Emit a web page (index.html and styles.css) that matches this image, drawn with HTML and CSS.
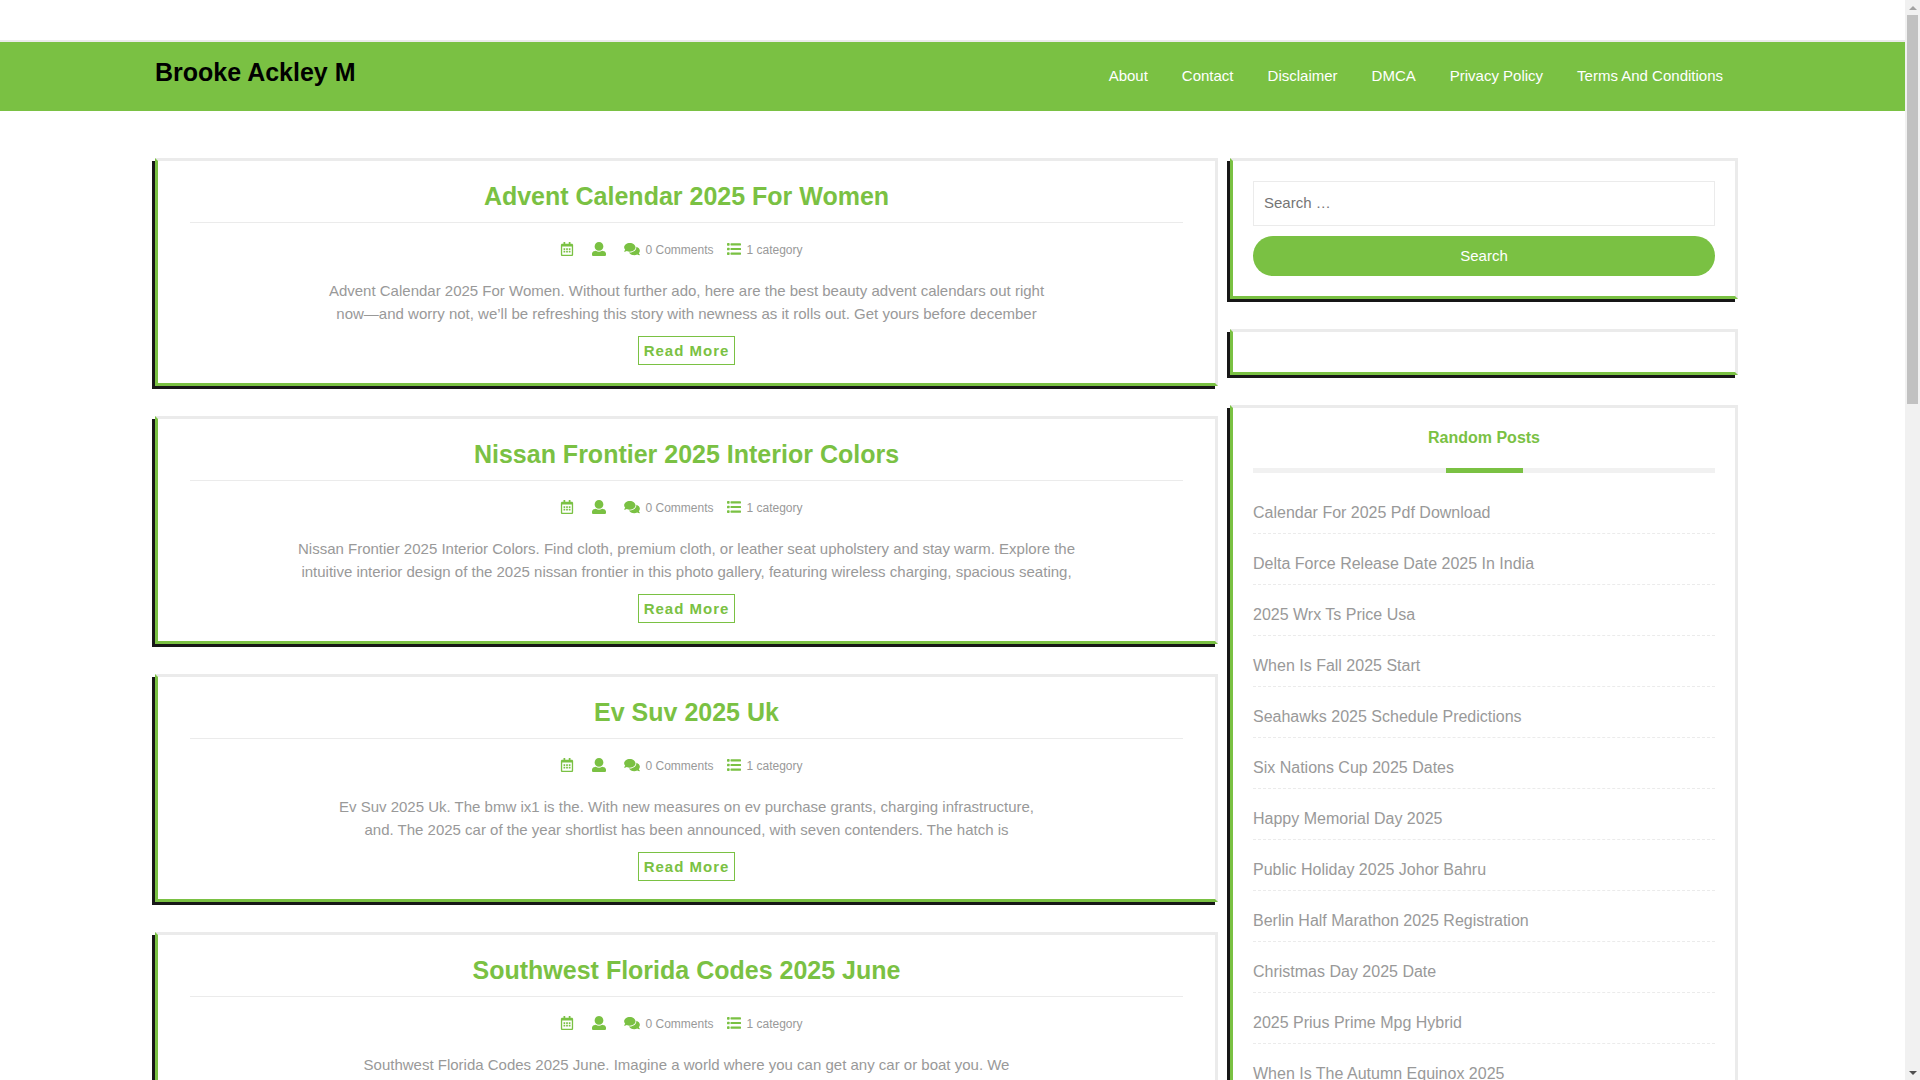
FILE: index.html
```html
<!DOCTYPE html>
<html lang="en">
<head>
<meta charset="utf-8">
<meta name="viewport" content="width=device-width, initial-scale=1">
<title>Brooke Ackley M</title>
<link rel="stylesheet" href="styles.css">
</head>
<body>
<svg class="sprite" aria-hidden="true">
  <symbol id="calendar" viewBox="0 0 448 512"><path d="M148 288h-40c-6.600 0-12-5.400-12-12v-40c0-6.600 5.400-12 12-12h40c6.600 0 12 5.400 12 12v40c0 6.600-5.400 12-12 12zm108-12v-40c0-6.600-5.400-12-12-12h-40c-6.600 0-12 5.400-12 12v40c0 6.600 5.400 12 12 12h40c6.600 0 12-5.400 12-12zm96 0v-40c0-6.600-5.400-12-12-12h-40c-6.600 0-12 5.400-12 12v40c0 6.600 5.400 12 12 12h40c6.600 0 12-5.400 12-12zm-96 96v-40c0-6.600-5.400-12-12-12h-40c-6.600 0-12 5.400-12 12v40c0 6.600 5.400 12 12 12h40c6.600 0 12-5.400 12-12zm-96 0v-40c0-6.600-5.400-12-12-12h-40c-6.600 0-12 5.400-12 12v40c0 6.600 5.400 12 12 12h40c6.600 0 12-5.400 12-12zm192 0v-40c0-6.600-5.400-12-12-12h-40c-6.600 0-12 5.400-12 12v40c0 6.600 5.400 12 12 12h40c6.600 0 12-5.400 12-12zm96-260v352c0 26.500-21.500 48-48 48H48c-26.500 0-48-21.500-48-48V112c0-26.500 21.500-48 48-48h48V12c0-6.600 5.400-12 12-12h40c6.600 0 12 5.400 12 12v52h128V12c0-6.600 5.400-12 12-12h40c6.600 0 12 5.400 12 12v52h48c26.500 0 48 21.500 48 48zm-48 346V160H48v298c0 3.300 2.700 6 6 6h340c3.300 0 6-2.700 6-6z"/></symbol>
  <symbol id="user" viewBox="0 0 512 512"><path d="M256 0c88.366 0 160 71.634 160 160s-71.634 160-160 160S96 248.366 96 160 167.634 0 256 0zm183.283 333.821l-71.313-17.828c-74.923 53.890-165.738 41.864-225.940 0l-71.313 17.828C29.981 344.505 0 382.903 0 426.955V464c0 26.510 21.490 48 48 48h416c26.510 0 48-21.490 48-48v-37.045c0-44.052-29.981-82.450-72.717-93.134z"/></symbol>
  <symbol id="comments" viewBox="0 0 576 512"><path d="M416 192c0-88.400-93.100-160-208-160S0 103.600 0 192c0 34.300 14.100 65.900 38 92-13.400 30.200-35.500 54.200-35.800 54.500-2.200 2.300-2.800 5.700-1.500 8.700S4.800 352 8 352c36.600 0 66.900-12.300 88.700-25 32.200 15.700 70.300 25 111.300 25 114.900 0 208-71.600 208-160zm122 220c23.900-26 38-57.700 38-92 0-66.900-53.500-124.200-129.300-148.100.900 6.600 1.300 13.300 1.300 20.100 0 105.900-107.700 192-240 192-10.800 0-21.300-.8-31.700-1.900C207.800 439.600 281.800 480 368 480c41 0 79.100-9.200 111.300-25 21.800 12.700 52.100 25 88.700 25 3.200 0 6.100-1.900 7.300-4.800 1.300-2.900.7-6.300-1.500-8.700-.3-.2-22.400-24.200-35.800-54.500z"/></symbol>
  <symbol id="list" viewBox="0 0 512 512"><rect y="40" width="96" height="96" rx="24"/><rect y="208" width="96" height="96" rx="24"/><rect y="376" width="96" height="96" rx="24"/><rect x="128" y="48" width="384" height="80" rx="16"/><rect x="128" y="216" width="384" height="80" rx="16"/><rect x="128" y="384" width="384" height="80" rx="16"/></symbol>
</svg>
<div class="frame">
  <div class="pane">
    <header class="header">
      <div class="topbar"></div>
      <div class="navbar container">
        <a class="brand" href="#">Brooke Ackley M</a>
        <nav class="menu">
          <a href="#">About</a>
          <a href="#">Contact</a>
          <a href="#">Disclaimer</a>
          <a href="#">DMCA</a>
          <a href="#">Privacy Policy</a>
          <a href="#">Terms And Conditions</a>
        </nav>
      </div>
    </header>
    <div class="content container">
      <main class="stack">
        <article class="card post">
          <h2 class="post-title"><a href="#">Advent Calendar 2025 For Women</a></h2>
          <div class="meta">
            <svg class="icon"><use href="#calendar"/></svg>
            <svg class="icon"><use href="#user"/></svg>
            <span class="meta-item"><svg class="icon icon-wide"><use href="#comments"/></svg>0 Comments</span>
            <span class="meta-item"><svg class="icon"><use href="#list"/></svg>1 category</span>
          </div>
          <p class="excerpt">Advent Calendar 2025 For Women. Without further ado, here are the best beauty advent calendars out right<br>now—and worry not, we’ll be refreshing this story with newness as it rolls out. Get yours before december</p>
          <a class="more" href="#">Read More</a>
        </article>
        <article class="card post">
          <h2 class="post-title"><a href="#">Nissan Frontier 2025 Interior Colors</a></h2>
          <div class="meta">
            <svg class="icon"><use href="#calendar"/></svg>
            <svg class="icon"><use href="#user"/></svg>
            <span class="meta-item"><svg class="icon icon-wide"><use href="#comments"/></svg>0 Comments</span>
            <span class="meta-item"><svg class="icon"><use href="#list"/></svg>1 category</span>
          </div>
          <p class="excerpt">Nissan Frontier 2025 Interior Colors. Find cloth, premium cloth, or leather seat upholstery and stay warm. Explore the<br>intuitive interior design of the 2025 nissan frontier in this photo gallery, featuring wireless charging, spacious seating,</p>
          <a class="more" href="#">Read More</a>
        </article>
        <article class="card post">
          <h2 class="post-title"><a href="#">Ev Suv 2025 Uk</a></h2>
          <div class="meta">
            <svg class="icon"><use href="#calendar"/></svg>
            <svg class="icon"><use href="#user"/></svg>
            <span class="meta-item"><svg class="icon icon-wide"><use href="#comments"/></svg>0 Comments</span>
            <span class="meta-item"><svg class="icon"><use href="#list"/></svg>1 category</span>
          </div>
          <p class="excerpt">Ev Suv 2025 Uk. The bmw ix1 is the. With new measures on ev purchase grants, charging infrastructure,<br>and. The 2025 car of the year shortlist has been announced, with seven contenders. The hatch is</p>
          <a class="more" href="#">Read More</a>
        </article>
        <article class="card post">
          <h2 class="post-title"><a href="#">Southwest Florida Codes 2025 June</a></h2>
          <div class="meta">
            <svg class="icon"><use href="#calendar"/></svg>
            <svg class="icon"><use href="#user"/></svg>
            <span class="meta-item"><svg class="icon icon-wide"><use href="#comments"/></svg>0 Comments</span>
            <span class="meta-item"><svg class="icon"><use href="#list"/></svg>1 category</span>
          </div>
          <p class="excerpt">Southwest Florida Codes 2025 June. Imagine a world where you can get any car or boat you. We</p>
          <a class="more" href="#">Read More</a>
        </article>
      </main>
      <aside class="stack">
        <section class="card widget">
          <form class="search">
            <input class="search-field" type="search" placeholder="Search …" aria-label="Search for">
            <button class="search-button" type="submit">Search</button>
          </form>
        </section>
        <section class="card widget"></section>
        <section class="card widget">
          <h3 class="widget-title">Random Posts</h3>
          <ul class="links">
            <li><a href="#">Calendar For 2025 Pdf Download</a></li>
            <li><a href="#">Delta Force Release Date 2025 In India</a></li>
            <li><a href="#">2025 Wrx Ts Price Usa</a></li>
            <li><a href="#">When Is Fall 2025 Start</a></li>
            <li><a href="#">Seahawks 2025 Schedule Predictions</a></li>
            <li><a href="#">Six Nations Cup 2025 Dates</a></li>
            <li><a href="#">Happy Memorial Day 2025</a></li>
            <li><a href="#">Public Holiday 2025 Johor Bahru</a></li>
            <li><a href="#">Berlin Half Marathon 2025 Registration</a></li>
            <li><a href="#">Christmas Day 2025 Date</a></li>
            <li><a href="#">2025 Prius Prime Mpg Hybrid</a></li>
            <li><a href="#">When Is The Autumn Equinox 2025</a></li>
          </ul>
        </section>
      </aside>
    </div>
  </div>
  <div class="scrollbar" aria-hidden="true">
    <span class="arrow arrow-up"></span>
    <div class="track"><div class="thumb"></div></div>
    <span class="arrow arrow-down"></span>
  </div>
</div>
</body>
</html>
```
FILE: styles.css
```css
*, *::before, *::after { box-sizing: border-box; }

body {
  margin: 0;
  background: #fff;
  color: #999;
  font: 15px/23px "Liberation Sans", Arial, sans-serif;
}

a { color: inherit; text-decoration: none; }

.sprite { display: none; }

.frame {
  display: grid;
  grid-template-columns: minmax(0, 1fr) 15px;
  height: 100vh;
}

.pane { overflow-y: auto; scrollbar-width: none; }

.container { padding-left: 155px; padding-right: 167px; }

/* Header */
.topbar { height: 42px; border-bottom: 2px solid #ebebeb; }

.navbar {
  display: flex;
  justify-content: space-between;
  align-items: flex-start;
  min-height: 69px;
  background: #7ac143;
}

.brand {
  padding-top: 15px;
  color: #000;
  font-size: 25px;
  line-height: 30px;
  font-weight: bold;
}

.menu { display: flex; gap: 34px; padding: 22px 15px 0; color: #fff; }

/* Columns */
.content {
  display: grid;
  grid-template-columns: minmax(0, 1063fr) minmax(0, 508fr);
  gap: 12px;
  align-items: start;
  padding-top: 47px;
}

.stack { display: flex; flex-direction: column; gap: 30px; }

.card {
  border: 3px solid #ebebeb;
  border-left-color: #7ac143;
  border-bottom-color: #7ac143;
  box-shadow: -3px 3px 0 #171717;
}

/* Posts */
.post {
  display: flex;
  flex-direction: column;
  align-items: center;
  padding: 20px 32px 18px;
  text-align: center;
}

.post-title {
  align-self: stretch;
  margin: 0;
  padding-bottom: 11px;
  border-bottom: 1px solid #ebebeb;
  color: #7ac143;
  font-size: 25px;
  line-height: 30px;
}

.meta {
  display: flex;
  align-items: center;
  gap: 18px;
  margin-top: 19px;
  padding-right: 10px;
  font-size: 12px;
  line-height: 16px;
}

.meta-item { display: flex; align-items: center; gap: 5px; }
.meta-item + .meta-item { margin-left: -4px; }

.icon { width: 14px; height: 14px; margin-bottom: 2px; fill: #7ac143; }
.icon-wide { width: 16px; }

.excerpt { min-height: 46px; margin: 21px 0 11px; }

.more {
  padding: 2px 5px;
  border: 1px solid #7ac143;
  color: #7ac143;
  font-weight: bold;
  letter-spacing: 1px;
}

/* Sidebar */
.widget { padding: 20px; }

.search { display: flex; flex-direction: column; gap: 10px; }

.search-field {
  height: 45px;
  padding: 0 10px 2px;
  border: 1px solid #ebebeb;
  background: #fff;
  font: inherit;
  appearance: none;
}

.search-field::placeholder { color: #757575; }

.search-button {
  height: 40px;
  padding: 0 0 2px;
  border: 0;
  border-radius: 20px;
  background: #7ac143;
  color: #fff;
  font: inherit;
}

.widget-title {
  margin: 0;
  color: #7ac143;
  font-size: 16px;
  line-height: 20px;
  text-align: center;
}

.widget-title::after {
  content: "";
  display: block;
  height: 5px;
  margin-top: 20px;
  background: linear-gradient(#7ac143, #7ac143) center / 77px 5px no-repeat #f1f1f1;
}

.links { margin: 0; padding: 10px 0 0; list-style: none; font-size: 16px; }

.links li { padding: 18px 0 9px; border-bottom: 1px dashed #ebebeb; }

/* Scrollbar */
.scrollbar {
  display: flex;
  flex-direction: column;
  align-items: center;
  background: #f1f1f1;
}

.track { flex: 1; width: 11px; margin: 5px 0; }
.thumb { height: 37%; background: #c1c1c1; }

.arrow { border: 4px solid transparent; border-width: 0 4px; }
.arrow-up { margin-top: 6px; border-bottom: 4px solid #a3a3a3; }
.arrow-down { margin-bottom: 5px; border-top: 4px solid #505050; }
```
